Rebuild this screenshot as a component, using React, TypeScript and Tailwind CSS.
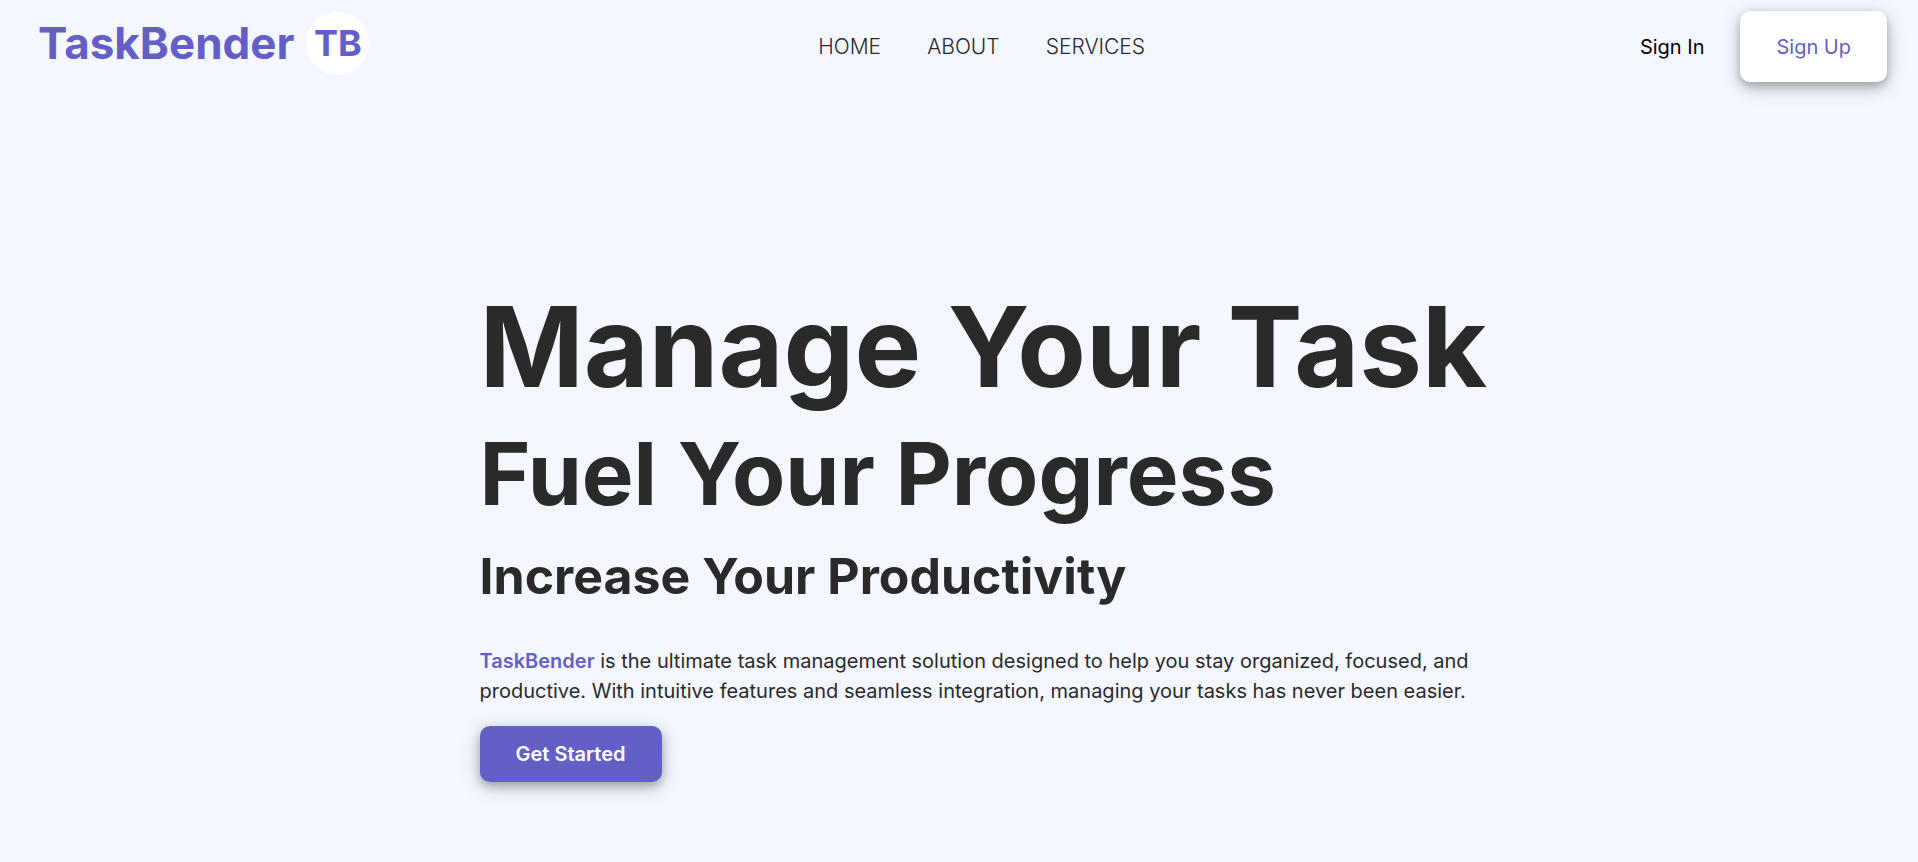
const navItems = ["HOME", "ABOUT", "SERVICES"];

export default function App() {
  return (
    <div className="min-h-screen bg-[#f4f7ff] font-['Inter',sans-serif] text-[#2a2a2a]">
      <header className="flex items-start justify-between pt-[11px] pr-[31px] pl-[38px]">
        <a href="#" className="flex items-center gap-3 text-[#635fc7]">
          <span className="text-[44px] leading-[64px] font-bold">TaskBender</span>
          <span className="flex size-[63px] items-center justify-center rounded-full bg-white text-4xl font-bold">TB</span>
        </a>
        <nav className="flex h-[71px] items-center gap-[46px] text-[21px] font-light">
          {navItems.map((item) => (
            <a key={item} href={`#${item.toLowerCase()}`}>{item}</a>
          ))}
        </nav>
        <div className="flex items-center gap-9 pl-[46px] text-xl">
          <button type="button" className="text-black">Sign In</button>
          <button type="button" className="h-[71px] rounded-[10px] bg-white px-9 text-[#635fc7] shadow-[0_4px_8px_rgba(0,0,0,0.22),0_5px_20px_rgba(0,0,0,0.22)]">Sign Up</button>
        </div>
      </header>
      <main className="pt-48 pl-[25%]">
        <h1 className="text-[112px] leading-[144px] font-bold whitespace-nowrap">Manage Your Task</h1>
        <h2 className="text-[87px] leading-[112px] font-bold">Fuel Your Progress</h2>
        <h3 className="text-[50px] leading-[92px] font-bold">Increase Your Productivity</h3>
        <p className="mt-6 max-w-[1010px] text-xl leading-[30px] font-normal">
          <strong className="font-semibold text-[#635fc7]">TaskBender</strong> is the ultimate task management solution designed to help you stay organized, focused, and productive. With intuitive features and seamless integration, managing your tasks has never been easier.
        </p>
        <button type="button" className="mt-5 h-14 rounded-[10px] bg-[#635fc7] px-9 text-xl font-semibold text-white shadow-[0_4px_8px_rgba(0,0,0,0.22),0_5px_20px_rgba(0,0,0,0.22)]">Get Started</button>
      </main>
    </div>
  );
}
